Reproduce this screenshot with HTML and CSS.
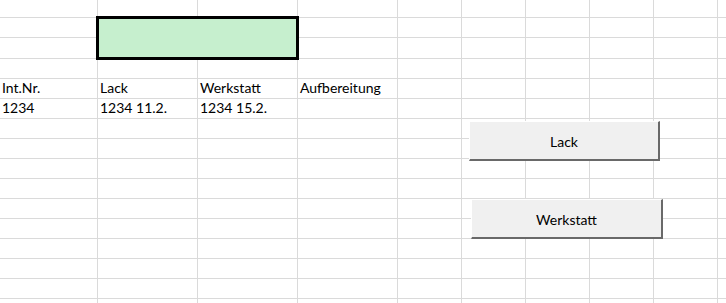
FILE: index.html
```html
<!DOCTYPE html>
<html lang="de">
<head>
<meta charset="utf-8">
<title>Tabelle</title>
<link rel="stylesheet" href="styles.css">
</head>
<body>
<div class="sheet">
  <div class="grid">
    <div class="c"></div><div class="c"></div><div class="c"></div><div class="c"></div><div class="c"></div><div class="c"></div><div class="c"></div><div class="c"></div><div class="c"></div><div class="c"></div>
    <div class="c"></div><div class="c merged"></div><div class="c"></div><div class="c"></div><div class="c"></div><div class="c"></div><div class="c"></div><div class="c"></div><div class="c"></div>
    <div class="c"></div><div class="c"></div><div class="c"></div><div class="c"></div><div class="c"></div><div class="c"></div><div class="c"></div><div class="c"></div>
    <div class="c"></div><div class="c"></div><div class="c"></div><div class="c"></div><div class="c"></div><div class="c"></div><div class="c"></div><div class="c"></div><div class="c"></div><div class="c"></div>
    <div class="c">Int.Nr.</div><div class="c">Lack</div><div class="c">Werkstatt</div><div class="c">Aufbereitung</div><div class="c"></div><div class="c"></div><div class="c"></div><div class="c"></div><div class="c"></div><div class="c"></div>
    <div class="c">1234</div><div class="c">1234 11.2.</div><div class="c">1234 15.2.</div><div class="c"></div><div class="c"></div><div class="c"></div><div class="c"></div><div class="c"></div><div class="c"></div><div class="c"></div>
    <div class="c"></div><div class="c"></div><div class="c"></div><div class="c"></div><div class="c"></div><div class="c"></div><div class="c"></div><div class="c"></div><div class="c"></div><div class="c"></div>
    <div class="c"></div><div class="c"></div><div class="c"></div><div class="c"></div><div class="c"></div><div class="c"></div><div class="c"></div><div class="c"></div><div class="c"></div><div class="c"></div>
    <div class="c"></div><div class="c"></div><div class="c"></div><div class="c"></div><div class="c"></div><div class="c"></div><div class="c"></div><div class="c"></div><div class="c"></div><div class="c"></div>
    <div class="c"></div><div class="c"></div><div class="c"></div><div class="c"></div><div class="c"></div><div class="c"></div><div class="c"></div><div class="c"></div><div class="c"></div><div class="c"></div>
    <div class="c"></div><div class="c"></div><div class="c"></div><div class="c"></div><div class="c"></div><div class="c"></div><div class="c"></div><div class="c"></div><div class="c"></div><div class="c"></div>
    <div class="c"></div><div class="c"></div><div class="c"></div><div class="c"></div><div class="c"></div><div class="c"></div><div class="c"></div><div class="c"></div><div class="c"></div><div class="c"></div>
    <div class="c"></div><div class="c"></div><div class="c"></div><div class="c"></div><div class="c"></div><div class="c"></div><div class="c"></div><div class="c"></div><div class="c"></div><div class="c"></div>
    <div class="c"></div><div class="c"></div><div class="c"></div><div class="c"></div><div class="c"></div><div class="c"></div><div class="c"></div><div class="c"></div><div class="c"></div><div class="c"></div>
    <div class="c"></div><div class="c"></div><div class="c"></div><div class="c"></div><div class="c"></div><div class="c"></div><div class="c"></div><div class="c"></div><div class="c"></div><div class="c"></div>
    <div class="c"></div><div class="c"></div><div class="c"></div><div class="c"></div><div class="c"></div><div class="c"></div><div class="c"></div><div class="c"></div><div class="c"></div><div class="c"></div>
  </div>
  <button class="btn btn-lack" type="button">Lack</button>
  <button class="btn btn-werkstatt" type="button">Werkstatt</button>
</div>
</body>
</html>
```
FILE: styles.css
```css
html, body {
  margin: 0;
  padding: 0;
  background: #ffffff;
  overflow: hidden;
}

.sheet {
  position: relative;
  width: 726px;
  height: 303px;
  overflow: hidden;
  font-family: Lato, "Liberation Sans", sans-serif;
  font-size: 14px;
  color: #000;
}

.grid {
  display: grid;
  grid-template-columns: 97px 99px 99px 99px 63px 63px 63px 63px 63px 20px;
  grid-template-rows: 17px 19px 20px repeat(12, 19px) 10px;
  gap: 1px;
  background: #dadada;
  width: 760px;
}

.c {
  background: #ffffff;
  display: flex;
  align-items: flex-end;
  padding: 0 0 2px 2px;
  line-height: 17px;
  white-space: nowrap;
  overflow: visible;
}

.merged {
  grid-column: 2 / 4;
  grid-row: 2 / 4;
  background: #c6efce;
  border: 1px solid #000;
  outline: 2px solid #000;
  z-index: 1;
}

.btn {
  position: absolute;
  box-sizing: border-box;
  height: 40px;
  background: #f0f0f0;
  border-style: solid;
  border-width: 1px 2px 2px 1px;
  border-color: #ffffff #696969 #696969 #ffffff;
  font-family: Lato, "Liberation Sans", sans-serif;
  font-size: 14px;
  color: #000;
  padding: 2px 0 0 0;
  margin: 0;
}

.btn-lack {
  left: 469px;
  top: 121px;
  width: 191px;
}

.btn-werkstatt {
  left: 471px;
  top: 199px;
  width: 192px;
}
```
